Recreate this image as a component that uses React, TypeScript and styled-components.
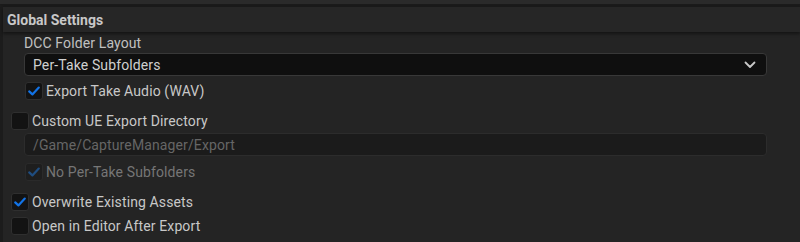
import styled, { createGlobalStyle } from 'styled-components';

const GlobalStyle = createGlobalStyle`
  html, body {
    margin: 0;
    padding: 0;
    background: #242424;
    font-family: Roboto, "Noto Sans", "Liberation Sans", sans-serif;
    font-size: 14px;
    letter-spacing: 0.12px;
    color: #c0c0c0;
    overflow: hidden;
  }
`;

const TopStrip = styled.div`
  height: 4px;
  background: #2a2a2a;
`;

const Panel = styled.div`
  height: 238px;
  box-sizing: border-box;
  border-top: 3px solid #1a1a1a;
  border-left: 3px solid #1c1c1c;
  background: #242424;
  display: flex;
  flex-direction: column;
`;

const Header = styled.div`
  height: 25px;
  display: flex;
  align-items: center;
  padding-left: 4px;
  background: #262626;
  box-shadow: 0 2px 3px rgba(0, 0, 0, 0.45);
  font-weight: 700;
  font-size: 14px;
  letter-spacing: 0;
  color: #c8c8c8;
  position: relative;
  z-index: 1;
`;

const Body = styled.div`
  display: flex;
  flex-direction: column;
  padding: 2px 33px 0 8px;
`;

const Label = styled.div<{ indent?: number }>`
  height: 18px;
  display: flex;
  align-items: center;
  padding-left: ${({ indent = 0 }) => indent}px;
  margin-bottom: 1px;
`;

const Field = styled.div<{ disabled?: boolean }>`
  height: 23px;
  box-sizing: border-box;
  margin-left: 13px;
  display: flex;
  align-items: center;
  justify-content: space-between;
  padding: 0 10px 0 8px;
  border-radius: 4px;
  border: 1px solid ${({ disabled }) => (disabled ? '#2c2c2c' : '#383838')};
  background: ${({ disabled }) => (disabled ? '#1b1b1b' : '#0f0f0f')};
  color: ${({ disabled }) => (disabled ? '#666666' : '#d0d0d0')};
`;

const Row = styled.label<{ indent?: number; disabled?: boolean }>`
  height: 24px;
  display: flex;
  align-items: center;
  gap: 3px;
  padding-left: ${({ indent = 0 }) => indent}px;
  color: ${({ disabled }) => (disabled ? '#767676' : '#c8c8c8')};
`;

const Box = styled.span<{ disabled?: boolean }>`
  width: 18px;
  height: 18px;
  box-sizing: border-box;
  border-radius: 3px;
  border: 1px solid ${({ disabled }) => (disabled ? '#2a2a2a' : '#2f2f2f')};
  background: ${({ disabled }) => (disabled ? '#1e1e1e' : '#131313')};
  display: flex;
  align-items: center;
  justify-content: center;
  flex-shrink: 0;
`;

const Check = ({ disabled }: { disabled?: boolean }) => (
  <svg width="14" height="14" viewBox="0 0 14 14">
    <path
      d="M2.2 7.4 L5.4 10.4 L11.8 3.6"
      fill="none"
      stroke={disabled ? '#1f4d80' : '#1273e6'}
      strokeWidth="2.2"
      strokeLinecap="round"
      strokeLinejoin="round"
    />
  </svg>
);

const Chevron = () => (
  <svg width="12" height="8" viewBox="0 0 12 8">
    <path
      d="M1.5 1.5 L6 6 L10.5 1.5"
      fill="none"
      stroke="#c8c8c8"
      strokeWidth="1.8"
      strokeLinecap="round"
      strokeLinejoin="round"
    />
  </svg>
);

type CheckRowProps = {
  label: string;
  checked?: boolean;
  disabled?: boolean;
  indent?: number;
  top?: number;
};

const CheckRow = ({ label, checked, disabled, indent = 0, top = 0 }: CheckRowProps) => (
  <Row indent={indent} disabled={disabled} style={top ? { marginTop: top } : undefined}>
    <Box disabled={disabled}>{checked && <Check disabled={disabled} />}</Box>
    <span>{label}</span>
  </Row>
);

export default function App() {
  return (
    <>
      <GlobalStyle />
      <TopStrip />
      <Panel>
        <Header>Global Settings</Header>
        <Body>
          <Label indent={13}>DCC Folder Layout</Label>
          <Field>
            <span>Per-Take Subfolders</span>
            <Chevron />
          </Field>
          <CheckRow label="Export Take Audio (WAV)" checked indent={14} top={3} />
          <CheckRow label="Custom UE Export Directory" top={6} />
          <Field disabled>
            <span>/Game/CaptureManager/Export</span>
          </Field>
          <CheckRow label="No Per-Take Subfolders" checked disabled indent={14} top={4} />
          <CheckRow label="Overwrite Existing Assets" checked top={6} />
          <CheckRow label="Open in Editor After Export" />
        </Body>
      </Panel>
    </>
  );
}
